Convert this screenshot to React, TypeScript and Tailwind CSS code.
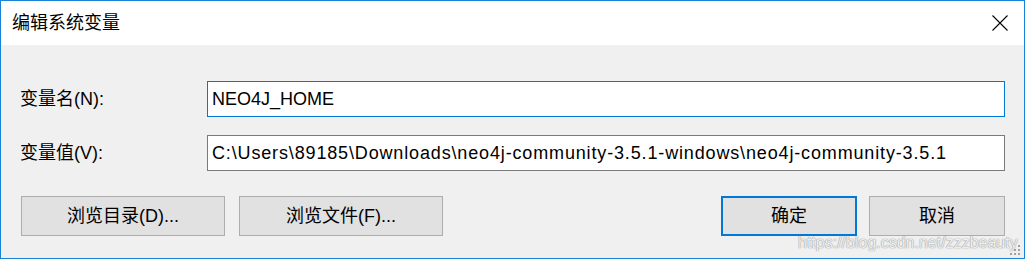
import React from "react";

const font = { fontFamily: '"Liberation Sans", "Noto Sans CJK SC", sans-serif' };

function Btn({ children, w, primary }: { children: React.ReactNode; w: string; primary?: boolean }) {
  return (
    <div
      className={`${w} h-[40px] flex items-center justify-center bg-[#e1e1e1] text-[18px] text-black ${
        primary ? "border-2 border-[#0078d7]" : "border border-[#adadad]"
      }`}
    >
      {children}
    </div>
  );
}

export default function App() {
  return (
    <div
      className="relative w-[1025px] h-[259px] border border-[#1883d7] bg-[#f0f0f0] flex flex-col overflow-hidden"
      style={font}
    >
      <div className="h-[44px] bg-white flex items-center justify-between pl-[11px] pr-[16px] shrink-0">
        <span className="text-[18px] text-black leading-none">编辑系统变量</span>
        <svg width="16" height="16" viewBox="0 0 16 16">
          <path d="M0.5 0.5 L15.5 15.5 M15.5 0.5 L0.5 15.5" stroke="#000" strokeWidth="1.1" />
        </svg>
      </div>
      <div className="flex flex-col pl-[19px] pr-[19px] pt-[36px]">
        <div className="flex items-center h-[36px]">
          <div className="w-[187px] text-[18px] text-black">变量名(N):</div>
          <div className="flex-1 h-[36px] border border-[#0078d7] bg-white flex items-center pl-[4px] text-[18px] text-black">
            NEO4J_HOME
          </div>
        </div>
        <div className="flex items-center h-[36px] mt-[18px]">
          <div className="w-[187px] text-[18px] text-black">变量值(V):</div>
          <div className="flex-1 h-[36px] border border-[#7a7a7a] bg-white flex items-center pl-[4px] text-[18px] tracking-[0.85px] text-black whitespace-nowrap">
            C:\Users\89185\Downloads\neo4j-community-3.5.1-windows\neo4j-community-3.5.1
          </div>
        </div>
        <div className="flex items-center mt-[25px] pl-[1px]">
          <div className="flex gap-[14px]">
            <Btn w="w-[204px]">浏览目录(D)...</Btn>
            <Btn w="w-[204px]">浏览文件(F)...</Btn>
          </div>
          <div className="flex gap-[12px] ml-auto">
            <Btn w="w-[136px]" primary>确定</Btn>
            <Btn w="w-[136px]">取消</Btn>
          </div>
        </div>
      </div>
      <div
        className="absolute left-[797px] top-[230px] text-[16px] text-white/85 whitespace-nowrap pointer-events-none"
        style={{ fontFamily: '"Liberation Sans", sans-serif', textShadow: "0 0 1px #8f8f8f, 0 0 1px #8f8f8f" }}
      >
        https://blog.csdn.net/zzzbeauty
      </div>
      <svg className="absolute right-[3px] bottom-[2px]" width="12" height="12" viewBox="0 0 12 12">
        <rect x="9" y="1" width="2" height="2" fill="#a0a0a0" />
        <rect x="5" y="5" width="2" height="2" fill="#a0a0a0" />
        <rect x="9" y="5" width="2" height="2" fill="#a0a0a0" />
        <rect x="1" y="9" width="2" height="2" fill="#a0a0a0" />
        <rect x="5" y="9" width="2" height="2" fill="#a0a0a0" />
        <rect x="9" y="9" width="2" height="2" fill="#a0a0a0" />
      </svg>
    </div>
  );
}
